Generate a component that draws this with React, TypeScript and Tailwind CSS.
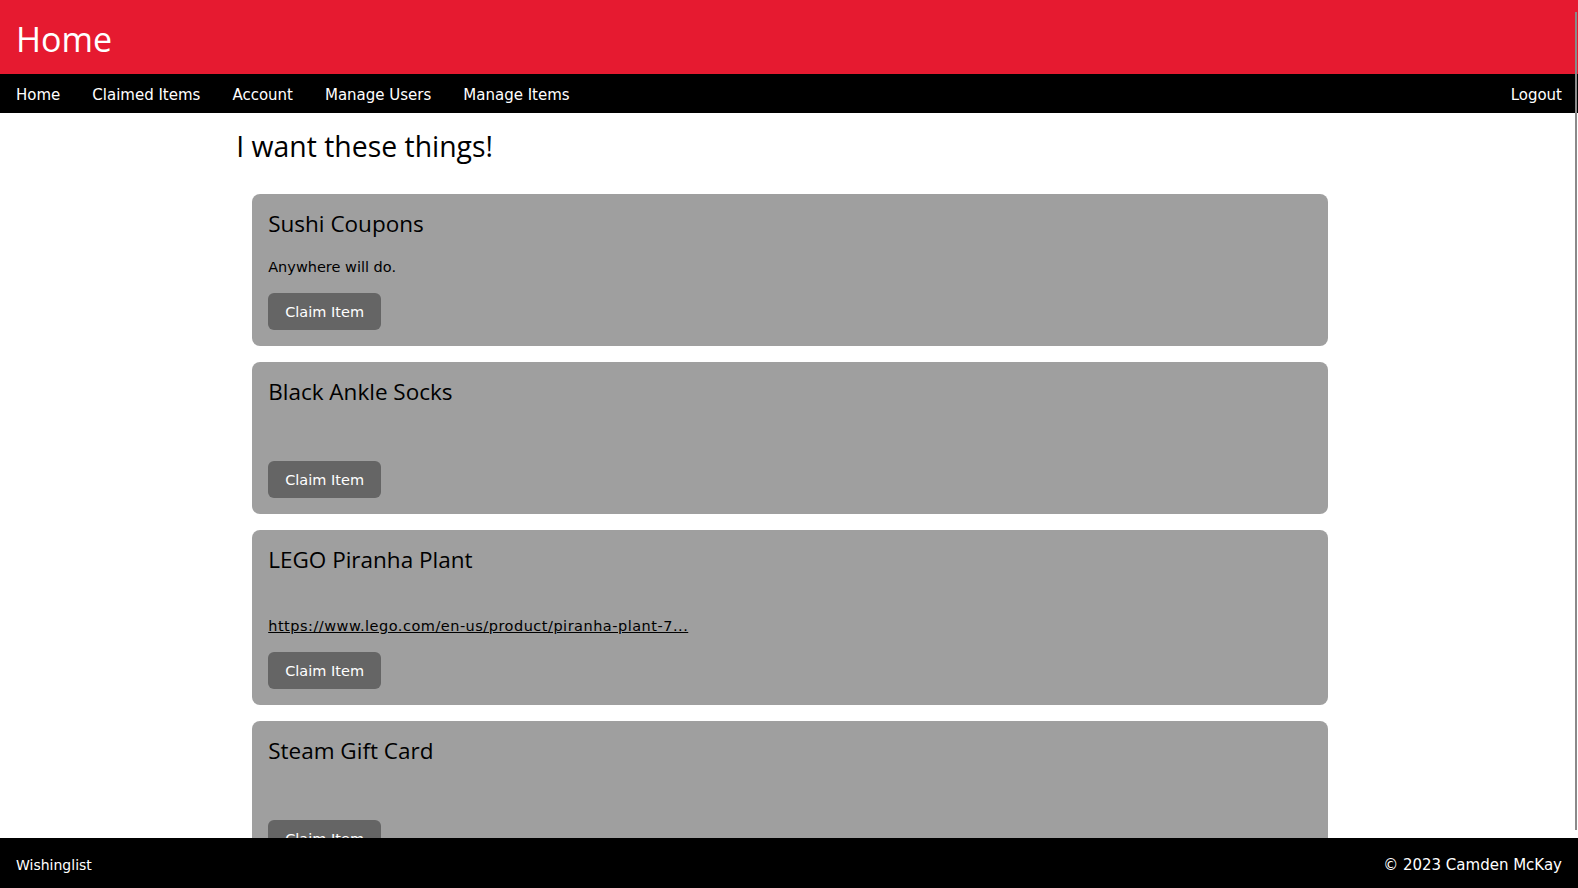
const items = [
  { name: "Sushi Coupons", description: "Anywhere will do.", link: "" },
  { name: "Black Ankle Socks", description: "", link: "" },
  {
    name: "LEGO Piranha Plant",
    description: "",
    link: "https://www.lego.com/en-us/product/piranha-plant-7...",
  },
  { name: "Steam Gift Card", description: "", link: "" },
]

const navLinks = ["Home", "Claimed Items", "Account", "Manage Users", "Manage Items"]

function ItemCard({ item }: { item: (typeof items)[number] }) {
  return (
    <div className="bg-[#9f9f9f] rounded-[8px] p-4 flex flex-col items-start">
      <h3 className="mt-[1px] mb-[22px] font-['Open_Sans',sans-serif] text-[22.5px] leading-[25px] text-black">
        {item.name}
      </h3>
      <p className="min-h-[18px] text-[14.5px] leading-[18px] text-black">{item.description}</p>
      {item.link && (
        <a href="#" className="mt-[5px] text-[14.5px] leading-[18px] tracking-[0.5px] text-black underline">
          {item.link}
        </a>
      )}
      <button className="mt-[17px] bg-[#656565] text-white rounded-[6px] px-[17px] pt-[10px] pb-[8px] text-[14.5px] leading-[19px]">
        Claim Item
      </button>
    </div>
  )
}

export default function App() {
  return (
    <div className="relative h-screen flex flex-col overflow-hidden bg-white font-['DejaVu_Sans',sans-serif]">
      {/* Title bar */}
      <header className="h-[74px] shrink-0 bg-[#e61a30] px-4 pt-[16px]">
        <h1 className="font-['Open_Sans',sans-serif] text-[34px] leading-[46px] text-white">Home</h1>
      </header>

      {/* Navigation */}
      <nav className="h-[39px] shrink-0 bg-black flex items-center justify-between pt-[2px]">
        <div className="flex">
          {navLinks.map((link) => (
            <a key={link} href="#" className="px-4 text-[15px] leading-[18px] text-white">
              {link}
            </a>
          ))}
        </div>
        <a href="#" className="px-4 text-[15px] leading-[18px] text-white">
          Logout
        </a>
      </nav>

      {/* Wishlist */}
      <main className="flex-1 overflow-hidden">
        <div className="w-[calc(70%+3px)] mx-auto">
          <h2 className="mt-[14px] mb-[29px] pl-[1px] font-['Open_Sans',sans-serif] text-[28.4px] leading-[38px] text-black">
            I want these things!
          </h2>
          <div className="pl-[17px] pr-[15px] flex flex-col gap-4">
            {items.map((item) => (
              <ItemCard key={item.name} item={item} />
            ))}
          </div>
        </div>
      </main>

      {/* Footer */}
      <footer className="h-[50px] shrink-0 bg-black flex items-center justify-between px-4 pt-[5px]">
        <span className="text-[14px] text-white">Wishinglist</span>
        <span className="text-[15px] text-white">© 2023 Camden McKay</span>
      </footer>

      {/* overlay scrollbar thumb */}
      <div className="absolute right-[1px] top-[12px] h-[818px] w-[2px] bg-[#8a8a8a]" />
    </div>
  )
}
